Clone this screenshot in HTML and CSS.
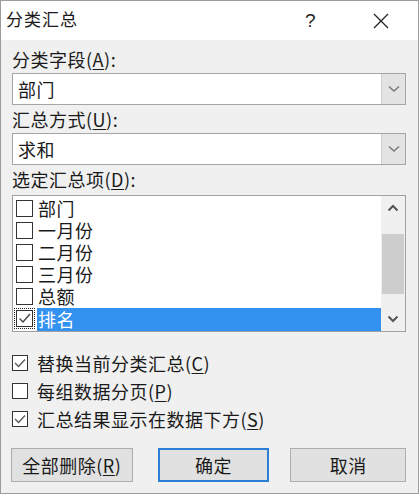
FILE: index.html
```html
<!DOCTYPE html>
<html lang="zh-CN">
<head>
    <meta charset="UTF-8">
    <title>分类汇总</title>
    <link rel="stylesheet" href="styles.css">
</head>
<body>
    <div class="dialog">
        <div class="title-bar">
            <span class="title">分类汇总</span>
            <span class="help">?</span>
            <span class="close">
                <svg width="16" height="16" viewBox="0 0 16 16"><path d="M1 1L15 15M15 1L1 15" stroke="#222" stroke-width="1.3" fill="none"/></svg>
            </span>
        </div>

        <div class="content">
            <div class="label label-first">分类字段(<u>A</u>):</div>
            <div class="combo">
                <span class="combo-text">部门</span>
                <span class="combo-btn">
                    <svg width="12" height="8" viewBox="0 0 12 8"><path d="M1 1.5L6 6L11 1.5" stroke="#777" stroke-width="1.4" fill="none"/></svg>
                </span>
            </div>

            <div class="label">汇总方式(<u>U</u>):</div>
            <div class="combo">
                <span class="combo-text">求和</span>
                <span class="combo-btn">
                    <svg width="12" height="8" viewBox="0 0 12 8"><path d="M1 1.5L6 6L11 1.5" stroke="#777" stroke-width="1.4" fill="none"/></svg>
                </span>
            </div>

            <div class="label label-list">选定汇总项(<u>D</u>):</div>
            <div class="list-box">
                <div class="list-items">
                    <div class="item"><span class="box"></span><span class="item-text">部门</span></div>
                    <div class="item"><span class="box"></span><span class="item-text">一月份</span></div>
                    <div class="item"><span class="box"></span><span class="item-text">二月份</span></div>
                    <div class="item"><span class="box"></span><span class="item-text">三月份</span></div>
                    <div class="item"><span class="box"></span><span class="item-text">总额</span></div>
                    <div class="item selected">
                        <span class="box focus">
                            <svg width="15" height="15" viewBox="0 0 15 15"><path d="M2.5 7.5L6 11L13 3" stroke="#444" stroke-width="1.4" fill="none"/></svg>
                        </span>
                        <span class="item-text">排名</span>
                    </div>
                </div>
                <div class="scrollbar">
                    <span class="arrow">
                        <svg width="12" height="8" viewBox="0 0 12 8"><path d="M1.5 6.5L6 2L10.5 6.5" stroke="#555" stroke-width="2" fill="none"/></svg>
                    </span>
                    <div class="track"><div class="thumb"></div></div>
                    <span class="arrow">
                        <svg width="12" height="8" viewBox="0 0 12 8"><path d="M1.5 1.5L6 6L10.5 1.5" stroke="#555" stroke-width="2" fill="none"/></svg>
                    </span>
                </div>
            </div>

            <div class="options">
                <div class="option">
                    <span class="check checked">
                        <svg width="14" height="14" viewBox="0 0 14 14"><path d="M2 7L5.5 10.5L12 3.5" stroke="#555" stroke-width="1.3" fill="none"/></svg>
                    </span>
                    替换当前分类汇总(<u>C</u>)
                </div>
                <div class="option">
                    <span class="check"></span>
                    每组数据分页(<u>P</u>)
                </div>
                <div class="option">
                    <span class="check checked">
                        <svg width="14" height="14" viewBox="0 0 14 14"><path d="M2 7L5.5 10.5L12 3.5" stroke="#555" stroke-width="1.3" fill="none"/></svg>
                    </span>
                    汇总结果显示在数据下方(<u>S</u>)
                </div>
            </div>

            <div class="buttons">
                <button class="btn btn-remove">全部删除(<u>R</u>)</button>
                <button class="btn btn-ok">确定</button>
                <button class="btn btn-cancel">取消</button>
            </div>
        </div>
    </div>
</body>
</html>
```

FILE: styles.css
```css
body {
    margin: 0;
    padding: 0;
    background-color: #f0f0f0;
    font-family: 'Noto Sans CJK SC', 'Noto Sans', sans-serif;
    font-size: 18px;
    letter-spacing: 0.5px;
    color: #1a1a1a;
}

.dialog {
    width: 419px;
    height: 494px;
    box-sizing: border-box;
    border: 1px solid #9c9c9c;
    background-color: #f0f0f0;
    display: flex;
    flex-direction: column;
    overflow: hidden;
}

.title-bar {
    height: 39px;
    background-color: #fff;
    display: flex;
    align-items: center;
    flex-shrink: 0;
}

.title {
    padding-left: 5px;
    font-size: 17px;
    letter-spacing: 1px;
    flex: 1;
    margin-top: -4px;
}

.help {
    font-family: 'Liberation Sans', sans-serif;
    font-size: 19px;
    width: 20px;
    margin-right: 48px;
    color: #222;
}

.close {
    width: 16px;
    height: 16px;
    margin-right: 29px;
    display: flex;
}

/* corpo do dialogo */
.content {
    padding: 0 12px 0 11px;
    display: flex;
    flex-direction: column;
}

.label {
    height: 20px;
    line-height: 20px;
    margin: 4px 0 4px 0;
}

.label-first {
    margin-top: 9px;
}

.label-list {
    margin-bottom: 6px;
}

u {
    text-decoration-thickness: 1px;
    text-underline-offset: 2px;
}

.combo {
    height: 32px;
    box-sizing: border-box;
    border: 1px solid #a5a5a5;
    background-color: #fff;
    display: flex;
    align-items: stretch;
}

.combo-text {
    flex: 1;
    line-height: 30px;
    padding-left: 5px;
}

.combo-btn {
    width: 23px;
    background-color: #e3e3e3;
    border-left: 1px solid #cfcfcf;
    display: flex;
    align-items: center;
    justify-content: center;
}

/* lista de campos */
.list-box {
    height: 137px;
    box-sizing: border-box;
    border: 1px solid #a0a0a0;
    background-color: #fff;
    display: flex;
}

.list-items {
    flex: 1;
    padding-top: 1px;
}

.item {
    height: 22px;
    display: flex;
    align-items: center;
}

.box {
    width: 15px;
    height: 15px;
    border: 1px solid #333;
    background-color: #fff;
    margin: 0 4px 0 3px;
    flex-shrink: 0;
    display: flex;
}

.box.focus {
    outline: 1px dotted #222;
    outline-offset: 1px;
}

.item-text {
    line-height: 22px;
    padding-left: 1px;
}

.item.selected .item-text {
    flex: 1;
    background-color: #3391f0;
    color: #fff;
    height: 23px;
    margin-top: 2px;
}

.scrollbar {
    width: 24px;
    background-color: #f0f0f0;
    display: flex;
    flex-direction: column;
}

.arrow {
    height: 24px;
    display: flex;
    align-items: center;
    justify-content: center;
}

.track {
    flex: 1;
    display: flex;
    flex-direction: column;
    justify-content: center;
}

.thumb {
    height: 60px;
    margin: 0 1px;
    background-color: #cdcdcd;
}

/* opcoes */
.options {
    margin-top: 17px;
    display: flex;
    flex-direction: column;
}

.option {
    height: 28px;
    display: flex;
    align-items: center;
}

.check {
    width: 14px;
    height: 14px;
    border: 1px solid #333;
    background-color: #fff;
    margin-right: 9px;
    display: flex;
    flex-shrink: 0;
}

/* botoes */
.buttons {
    margin-top: 15px;
    display: flex;
}

.btn {
    font-family: 'Noto Sans CJK SC', 'Noto Sans', sans-serif;
    font-size: 18px;
    letter-spacing: 0.5px;
    color: #1a1a1a;
    height: 34px;
    padding: 0;
    background-color: #e1e1e1;
    border: 1px solid #adadad;
    border-radius: 0;
}

.btn-remove {
    width: 122px;
    margin-left: -1px;
}

.btn-ok {
    width: 112px;
    margin-left: 25px;
    border: 2px solid #2b7fd6;
}

.btn-cancel {
    width: 116px;
    margin-left: 21px;
}
```
